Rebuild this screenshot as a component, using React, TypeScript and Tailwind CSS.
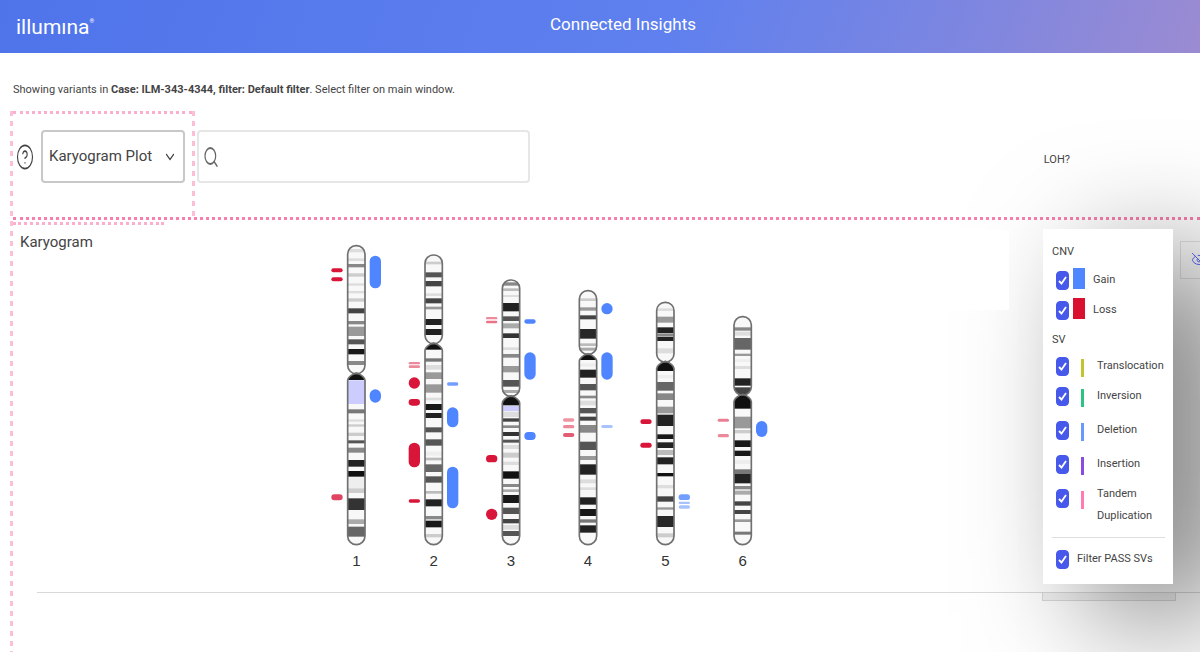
import { ChevronDown, CircleHelp, EyeOff, Search } from 'lucide-react'

type Band = [y: number, height: number, fill: string]
type Mark = [y: number, height: number, opacity?: number]

type Chromosome = {
  name: string
  x: number
  top: number
  // y where the short arm ends, and where the long arm's first band may start
  pinch: number
  cap: number
  bands: Band[]
  losses: Mark[]
  gains: Mark[]
}

const BOTTOM = 914

const CHROMOSOMES: Chromosome[] = [
  {
    name: '1',
    x: 109,
    top: 17,
    pinch: 401,
    cap: 420,
    bands: [
      [27, 10, '#ddd'], [55, 8, '#ddd'], [72, 10, '#888'], [100, 10, '#ccc'], [130, 7, '#ddd'], [153, 7, '#ddd'],
      [175, 10, '#ccc'], [205, 15, '#444'], [243, 10, '#888'], [260, 28, '#999'], [298, 15, '#555'], [327, 16, '#181818'],
      [363, 12, '#888'], [421, 71, '#ccccff'], [508, 12, '#777'], [538, 7, '#ddd'], [553, 7, '#ccc'], [578, 10, '#ccc'],
      [601, 9, '#555'], [623, 15, '#888'], [660, 20, '#222'], [693, 17, '#111'], [712, 32, '#eee'], [745, 14, '#ccc'],
      [775, 35, '#333'], [838, 14, '#aaa'], [860, 30, '#666'],
    ],
    losses: [[85, 12], [112, 12], [763, 18, 0.8]],
    gains: [[47, 98], [448, 40]],
  },
  {
    name: '2',
    x: 341,
    top: 45,
    pinch: 311,
    cap: 329,
    bands: [
      [65, 8, '#ccc'], [97, 15, '#555'], [123, 16, '#444'], [160, 8, '#ddd'], [175, 15, '#444'], [200, 8, '#999'],
      [237, 18, '#222'], [267, 18, '#222'], [355, 10, '#777'], [375, 14, '#ddd'], [397, 20, '#999'], [433, 25, '#999'],
      [473, 8, '#ddd'], [492, 18, '#181818'], [519, 15, '#222'], [562, 15, '#555'], [598, 19, '#555'], [635, 12, '#eee'],
      [653, 8, '#bbb'], [673, 23, '#666'], [709, 19, '#555'], [753, 8, '#bbb'], [778, 21, '#222'], [828, 10, '#888'],
      [842, 20, '#181818'], [882, 10, '#ccc'],
    ],
    losses: [[366, 7, 0.5], [376, 8, 0.5], [412, 34], [477, 20], [608, 74], [778, 10]],
    gains: [[427, 10, 0.8], [502, 60], [680, 125]],
  },
  {
    name: '3',
    x: 573,
    top: 120,
    pinch: 469,
    cap: 496,
    bands: [
      [127, 10, '#888'], [145, 8, '#bbb'], [165, 6, '#ddd'], [189, 25, '#222'], [229, 14, '#555'], [250, 15, '#aaa'],
      [280, 14, '#333'], [322, 8, '#ddd'], [342, 11, '#888'], [378, 19, '#999'], [420, 20, '#555'], [450, 9, '#aaa'],
      [498, 15, '#ccccff'], [515, 16, '#ddd'], [535, 10, '#444'], [556, 8, '#888'], [576, 12, '#333'], [599, 9, '#555'],
      [615, 12, '#ddd'], [638, 15, '#ccc'], [665, 10, '#ddd'], [694, 22, '#111'], [732, 9, '#888'], [748, 8, '#aaa'],
      [765, 24, '#181818'], [803, 19, '#555'], [837, 13, '#444'], [855, 14, '#ddd'], [873, 15, '#555'],
    ],
    losses: [[231, 7, 0.5], [242, 8, 0.6], [645, 22], [806, 34]],
    gains: [[238, 13], [337, 82], [576, 24]],
  },
  {
    name: '4',
    x: 804,
    top: 152,
    pinch: 343,
    cap: 360,
    bands: [
      [175, 8, '#ccc'], [202, 10, '#999'], [226, 12, '#444'], [267, 29, '#282828'], [310, 8, '#bbb'], [323, 9, '#aaa'],
      [370, 10, '#eee'], [389, 24, '#222'], [432, 19, '#555'], [467, 8, '#888'], [482, 14, '#ddd'], [504, 16, '#555'],
      [530, 12, '#444'], [555, 23, '#888'], [605, 25, '#555'], [648, 12, '#999'], [673, 31, '#222'], [718, 12, '#ddd'],
      [742, 8, '#ddd'], [772, 22, '#222'], [807, 21, '#181818'], [838, 10, '#777'], [856, 22, '#222'],
    ],
    losses: [[535, 10, 0.45], [555, 10, 0.5], [579, 12, 0.7]],
    gains: [[189, 34], [337, 82], [555, 9, 0.5]],
  },
  {
    name: '5',
    x: 1036,
    top: 187,
    pinch: 366,
    cap: 393,
    bands: [
      [205, 8, '#ddd'], [230, 18, '#999'], [262, 18, '#222'], [282, 6, '#888'], [290, 13, '#222'], [325, 15, '#ddd'],
      [405, 10, '#eee'], [426, 26, '#666'], [460, 20, '#888'], [500, 20, '#999'], [524, 34, '#222'], [583, 14, '#181818'],
      [607, 17, '#222'], [630, 15, '#bbb'], [652, 21, '#222'], [699, 10, '#111'], [735, 10, '#ddd'], [769, 16, '#444'],
      [802, 7, '#999'], [828, 33, '#282828'], [880, 12, '#ccc'],
    ],
    losses: [[538, 14], [608, 15]],
    gains: [[763, 17, 0.8], [785, 7, 0.5], [796, 10, 0.5]],
  },
  {
    name: '6',
    x: 1268,
    top: 230,
    pinch: 465,
    cap: 506,
    bands: [
      [262, 10, '#888'], [275, 12, '#ddd'], [294, 35, '#666'], [341, 7, '#999'], [358, 8, '#eee'], [378, 9, '#ddd'],
      [415, 22, '#222'], [442, 22, '#444'], [530, 35, '#999'], [570, 10, '#ccc'], [601, 20, '#181818'], [632, 16, '#181818'],
      [660, 12, '#eee'], [688, 14, '#777'], [702, 28, '#222'], [738, 10, '#888'], [752, 12, '#aaa'], [784, 13, '#444'],
      [810, 12, '#444'], [838, 8, '#999'], [875, 9, '#777'],
    ],
    losses: [[536, 9, 0.55], [582, 10, 0.5]],
    gains: [[543, 48]],
  },
]

const SV_TYPES = [
  { label: 'Translocation', bar: 'bg-[#c4c433]', row: '' },
  { label: 'Inversion', bar: 'bg-[#2cc483]', row: '' },
  { label: 'Deletion', bar: 'bg-[#6a98ff]', row: 'mt-1' },
  { label: 'Insertion', bar: 'bg-[#8a4be0]', row: 'mt-1' },
  { label: 'Tandem Duplication', bar: 'bg-[#ff7bb0]', row: 'mt-1' },
]

function Marks({ x, marks, fill }: { x: number; marks: Mark[]; fill: string }) {
  return (
    <>
      {marks.map(([y, height, opacity = 1]) => (
        <rect key={y} x={x - 17} y={y} width={34} height={height} rx={Math.min(17, height / 2)} fill={fill} opacity={opacity} />
      ))}
    </>
  )
}

function Ideogram({ chromosome }: { chromosome: Chromosome }) {
  const { name, x, top, pinch, cap, bands, losses, gains } = chromosome
  const clipId = `arms-${name}`
  const arms = (
    <>
      <rect x={x - 26} y={top} width={52} height={pinch - top} rx={25} />
      <path d={`M${x - 26} ${pinch + 20} Q${x - 24} ${pinch + 6} ${x} ${pinch - 2} Q${x + 24} ${pinch + 6} ${x + 26} ${pinch + 20} V${BOTTOM - 26} A26 26 0 0 1 ${x - 26} ${BOTTOM - 26} Z`} />
    </>
  )
  return (
    <g>
      <clipPath id={clipId}>{arms}</clipPath>
      <g clipPath={`url(#${clipId})`}>
        <rect x={x - 26} y={top} width={52} height={BOTTOM - top} fill="#f8f8f8" />
        {bands.map(([y, height, fill]) => (
          <rect key={y} x={x - 26} y={y} width={52} height={height} fill={fill} />
        ))}
        <rect x={x - 26} y={pinch} width={52} height={cap - pinch} fill="#111" />
      </g>
      <g fill="none" stroke="#707070" strokeWidth={5}>
        {arms}
      </g>
      <Marks x={x - 58} marks={losses} fill="#d9153a" />
      <Marks x={x + 57} marks={gains} fill="#4f86ff" />
      <text x={x} y={979} textAnchor="middle" fontSize={45} fill="#333">
        {name}
      </text>
    </g>
  )
}

function Checkbox({ id }: { id: string }) {
  return (
    <span className="grid shrink-0 place-items-center">
      <input
        id={id}
        type="checkbox"
        defaultChecked
        className="peer col-start-1 row-start-1 h-[19px] w-[13px] appearance-none rounded-sm border border-[#4759ea] checked:bg-[#4759ea]"
      />
      <svg viewBox="0 0 9 11" className="pointer-events-none col-start-1 row-start-1 hidden h-[11px] w-[9px] peer-checked:block">
        <path d="M1 6 L3.5 8.5 L8 2" fill="none" stroke="white" strokeWidth="1.8" />
      </svg>
    </span>
  )
}

function CnvRow({ id, label, color }: { id: string; label: string; color: string }) {
  return (
    <div className="flex h-[30px] items-center">
      <Checkbox id={id} />
      <span className={`mb-1 ml-1 h-[21px] w-3 ${color}`} />
      <label htmlFor={id} className="ml-2">
        {label}
      </label>
    </div>
  )
}

function Legend() {
  return (
    <aside className="absolute top-[9px] right-[27px] w-[130px] bg-white pt-3 pr-2 pl-[9px] text-[11px] leading-[22px] text-[#444] shadow-[50px_30px_120px_rgba(0,0,0,0.55)]">
      <h3 className="h-6">CNV</h3>
      <div className="pl-1">
        <CnvRow id="gain" label="Gain" color="bg-[#5086ff]" />
        <CnvRow id="loss" label="Loss" color="bg-[#d9102f]" />
      </div>
      <h3 className="h-[26px] pt-1">SV</h3>
      <div className="pl-1">
        {SV_TYPES.map(({ label, bar, row }) => (
          <div key={label} className={`flex h-[30px] items-center ${row}`}>
            <Checkbox id={label} />
            <span className={`mt-1 ml-3 h-[18px] w-[3px] shrink-0 ${bar}`} />
            <label htmlFor={label} className="ml-[13px] max-h-full">
              {label}
            </label>
          </div>
        ))}
      </div>
      <div className="mt-6 flex h-[47px] items-center border-t border-[#ddd] pb-1 pl-1">
        <Checkbox id="pass" />
        <label htmlFor="pass" className="ml-2 whitespace-nowrap">
          Filter PASS SVs
        </label>
      </div>
    </aside>
  )
}

export default function App() {
  return (
    <div className="flex min-h-screen flex-col overflow-hidden bg-white font-['Roboto','Liberation_Sans',sans-serif] text-[#444]">
      <header className="relative z-10 grid h-[53px] grid-cols-[1fr_auto_1fr] items-center bg-[linear-gradient(110deg,#4f74ea_0%,#5f80ee_56%,#7d86e0_80%,#9b8bd2_100%)] px-4 text-white">
        <a href="#" className="flex text-[21px] leading-8">
          illumına<span className="text-[6px] leading-5">®</span>
        </a>
        <h1 className="pb-1 pl-[46px] text-[17px]">Connected Insights</h1>
      </header>

      <p className="px-[13px] pt-[27px] pb-[11px] text-[11px] leading-5">
        Showing variants in <b>Case: ILM-343-4344, filter: Default filter</b>. Select filter on main window.
      </p>

      <main className="ml-[10px] flex flex-1">
        <div className="w-[3px] shrink-0 bg-[repeating-linear-gradient(#fbc0d8_0_5px,transparent_5px_10px)]" />
        <div className="flex min-w-0 flex-1 flex-col">
          <div className="flex h-[106px]">
            <div className="flex w-[179px] shrink-0 flex-col border-t-[3px] border-dotted border-[#fbaece] pl-[3px]">
              <div className="flex items-center gap-[7px] pt-4">
                <button aria-label="Help">
                  <CircleHelp className="h-[28px] w-[18px]" strokeWidth={1.5} preserveAspectRatio="none" />
                </button>
                <div className="relative flex items-center">
                  <select
                    aria-label="Plot type"
                    className="h-[53px] w-[144px] appearance-none rounded border-2 border-[#c8c8c8] bg-white pl-[6px] text-[15px]"
                  >
                    <option>Karyogram Plot</option>
                  </select>
                  <ChevronDown className="pointer-events-none absolute right-2 h-5 w-[14px]" strokeWidth={2} preserveAspectRatio="none" />
                </div>
              </div>
            </div>
            <div className="w-[3px] shrink-0 bg-[repeating-linear-gradient(#fbc0d8_0_5px,transparent_5px_10px)]" />
            <div className="relative mt-[19px] ml-[2px] flex h-[53px] w-[333px] items-center">
              <Search className="absolute left-[6px] h-6 w-4 text-[#666]" strokeWidth={1.8} preserveAspectRatio="none" />
              <input aria-label="Search" type="text" className="h-full w-full rounded border-2 border-[#e6e6e6] pl-7" />
            </div>
            <span className="mt-[39px] mr-[130px] ml-auto text-[11px] leading-5">LOH?</span>
          </div>
          <div className="border-t-[3px] border-dotted border-[#f77fae]" />

          <section className="relative flex flex-1 flex-col pt-[2px]">
            <Legend />
            <div className="absolute top-[21px] right-0 w-5 overflow-hidden border border-r-0 border-black/10">
              <button aria-label="Hide overlay" className="flex h-9 w-8 items-center pl-[10px] text-[#5058d8]">
                <EyeOff className="h-4 w-4" strokeWidth={1.5} />
              </button>
            </div>
            <div className="w-[151px] border-t-[3px] border-dotted border-[#fbaece]" />
            <div className="grid">
              <div className="relative col-start-1 row-start-1 mt-[5px] mr-[191px] h-20 bg-white pl-[7px]">
                <h2 className="text-[15px] leading-6">Karyogram</h2>
              </div>
              <svg
                viewBox="0 0 1380 990"
                role="img"
                aria-label="Karyogram of chromosomes 1 to 6"
                className="relative col-start-1 row-start-1 mt-[15px] ml-[307px] h-[330px] w-[460px] font-['Liberation_Sans',sans-serif]"
              >
                {CHROMOSOMES.map((c) => (
                  <Ideogram key={c.name} chromosome={c} />
                ))}
              </svg>
            </div>
            <hr className="mt-[22px] ml-6 border-black/15" />
            <div className="mr-6 ml-auto h-2 w-[134px] border border-t-0 border-black/10 bg-black/5" />
          </section>
        </div>
      </main>
    </div>
  )
}
